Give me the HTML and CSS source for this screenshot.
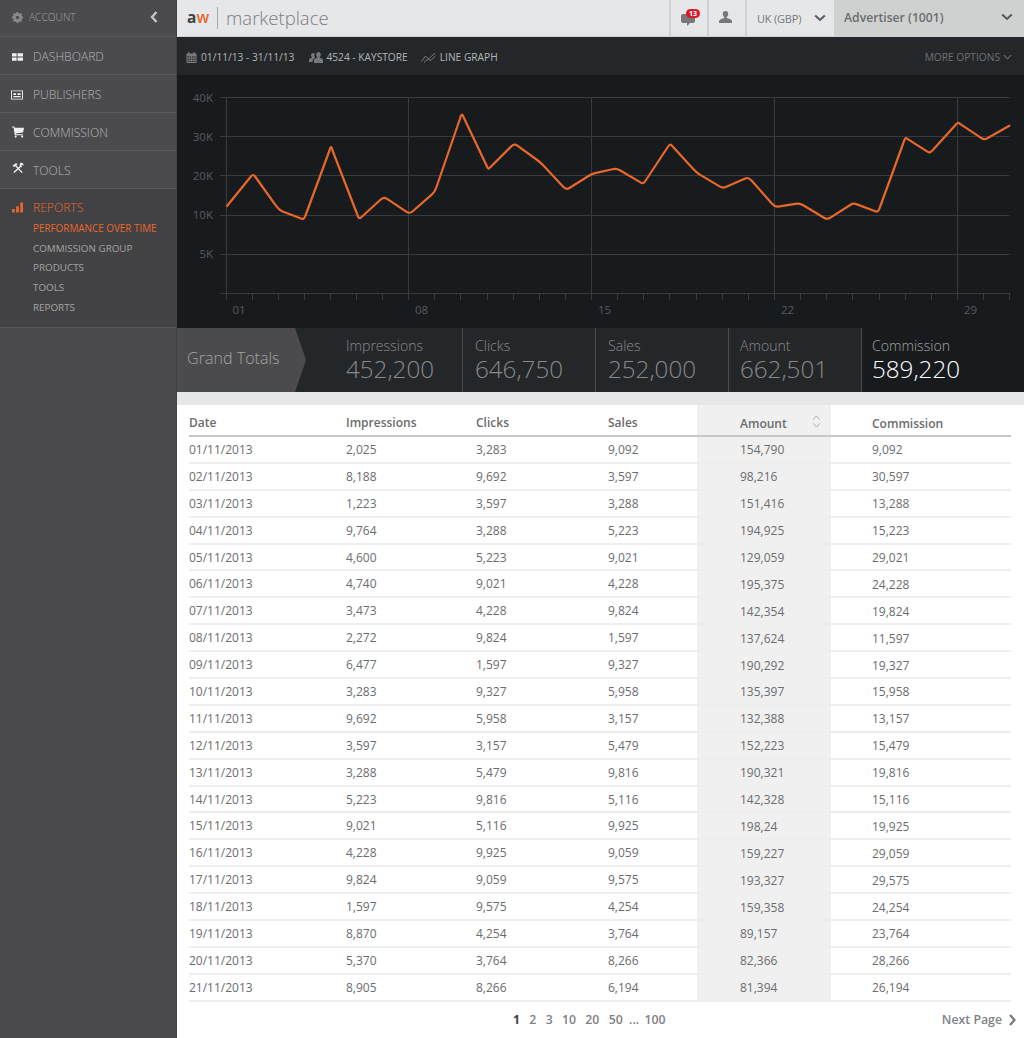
FILE: index.html
```html
<!DOCTYPE html>
<html lang="en">
<head>
<meta charset="utf-8">
<title>aw marketplace</title>
<link rel="stylesheet" href="styles.css">
</head>
<body>
<div class="app">
  <aside class="sidebar">
    <div class="account">
      <svg class="gear" viewBox="0 0 12 12"><path d="M5 0h2l.3 1.500 1 .4L9.600 1l1.400 1.400-.9 1.300.4 1 1.500.3v2l-1.500.3-.4 1 .9 1.300L9.600 11l-1.300-.9-1 .4L7 12H5l-.3-1.500-1-.4-1.300.9L1 9.600l.9-1.300-.4-1L0 7V5l1.500-.3.400-1L1 2.400 2.400 1l1.300.9 1-.4zM6 4a2 2 0 100 4 2 2 0 000-4z" fill-rule="evenodd"/></svg>
      <span class="account-label">ACCOUNT</span>
      <svg class="collapse" viewBox="0 0 8 12"><path d="M6.500 1L2 6l4.500 5" fill="none" stroke-width="2.400"/></svg>
    </div>
    <nav>
      <a class="nav-item">
        <svg class="nav-icon dash" viewBox="0 0 12 8"><path d="M0 0h5v3.500H0zM6 0h6v3.500H6zM0 4.500h5V8H0zM6 4.500h6V8H6z"/></svg>
        <span>DASHBOARD</span>
      </a>
      <a class="nav-item">
        <svg class="nav-icon pub" viewBox="0 0 13 10"><path fill-rule="evenodd" d="M0 0h13v10H0zM1 1v8h11V1zM2.500 3h3v2h-3zM7 3h3.500v2H7zM2.500 6h8v1.500h-8z"/></svg>
        <span>PUBLISHERS</span>
      </a>
      <a class="nav-item">
        <svg class="nav-icon cart" viewBox="0 0 13 12"><path d="M0 0h2.500l.5 1.500h10L12 6.500l-8 1 .3 1H12v1H3L1.700 1H0z"/><circle cx="4" cy="11" r="1.100"/><circle cx="11" cy="11" r="1.100"/></svg>
        <span>COMMISSION</span>
      </a>
      <a class="nav-item">
        <svg class="nav-icon tools" viewBox="0 0 13 12"><path class="tool-handle" d="M3 2.500L11 11M10 3.500L2 11"/><path d="M.5 3.500L4.500 .5 6 2 2 5zM9 .5C11-.2 12.800 1.200 12.500 3.500L11 2.500l-1 1 1 1.500C9.200 5.500 7.800 3.500 8.500 2z"/></svg>
        <span>TOOLS</span>
      </a>
      <div class="reports">
        <a class="nav-item active">
          <svg class="nav-icon" viewBox="0 0 12 11"><path d="M0 7h3v4H0zM4.500 4h3v7h-3zM9 0h3v11H9z"/></svg>
          <span>REPORTS</span>
        </a>
        <ul class="subnav">
          <li class="current">PERFORMANCE OVER TIME</li>
          <li>COMMISSION GROUP</li>
          <li>PRODUCTS</li>
          <li>TOOLS</li>
          <li>REPORTS</li>
        </ul>
      </div>
    </nav>
  </aside>

  <main class="main">
    <header class="topbar">
      <div class="logo">
        <span class="aw"><b>a</b><i>w</i></span>
        <span class="logo-name">marketplace</span>
      </div>
      <div class="top-cell msgs">
        <svg class="msg-icon" viewBox="0 0 14 13"><path d="M2 1h10a2 2 0 012 2v5a2 2 0 01-2 2H9l-3 3v-3H2a2 2 0 01-2-2V3a2 2 0 012-2z"/></svg>
        <span class="badge">13</span>
      </div>
      <div class="top-cell user">
        <svg class="user-icon" viewBox="0 0 13 12"><path d="M6.500 0C8.300 0 9.300 1.300 9.200 3c0 1.300-.6 2.500-1.400 3v1c1.800.6 4.200 1.200 5.200 3v2H0v-2c1-1.800 3.400-2.400 5.200-3V6c-.8-.5-1.400-1.700-1.400-3C3.700 1.300 4.700 0 6.500 0z"/></svg>
      </div>
      <div class="top-cell currency">
        <span>UK (GBP)</span>
        <svg class="chev" viewBox="0 0 12 8"><path d="M1.200 1.500L6 6l4.800-4.500" fill="none" stroke-width="2"/></svg>
      </div>
      <div class="advertiser">
        <span>Advertiser (1001)</span>
        <svg class="chev" viewBox="0 0 12 8"><path d="M1.200 1.500L6 6l4.800-4.500" fill="none" stroke-width="2"/></svg>
      </div>
    </header>

    <div class="toolbar">
      <span class="tool">
        <svg class="tool-icon cal" viewBox="0 0 11 12"><path fill-rule="evenodd" d="M2 0h1.500v1.500h4V0H9v1.500h2V12H0V1.500h2zM1 4.500V6h1.500V4.500zM3.500 4.500V6H5V4.500zM6 4.500V6h1.500V4.500zM8.500 4.500V6H10V4.500zM1 7v1.500h1.500V7zM3.500 7v1.500H5V7zM6 7v1.500h1.500V7zM8.500 7v1.500H10V7zM1 9.500V11h1.500V9.500zM3.500 9.500V11H5V9.500zM6 9.500V11h1.500V9.500zM8.500 9.500V11H10V9.500z"/></svg>
        01/11/13 - 31/11/13
      </span>
      <span class="tool">
        <svg class="tool-icon users" viewBox="0 0 14 11"><path d="M9.500 0c1.500 0 2.300 1 2.300 2.500 0 1.100-.5 2-1.100 2.500v.8c1.300.4 2.600 1 3.300 2V11H5V7.800c.7-1 2-1.600 3.300-2V5c-.6-.5-1.100-1.400-1.100-2.500C7.200 1 8 0 9.500 0zM4.500 1c.6 0 1.100.2 1.500.5-.5.700-.7 1.600-.6 2.500.1.700.4 1.500.9 2-1.100.4-2 .9-2.600 1.700V10H0V7.500c.6-.9 1.700-1.300 2.800-1.700v-.7C2.300 4.600 2 3.800 2 3c0-1.200.9-2 2.500-2z"/></svg>
        4524 - KAYSTORE
      </span>
      <span class="tool">
        <svg class="tool-icon trend" viewBox="0 0 15 11"><path d="M.5 9.500L4.500 4l3 3L14 1M3 10.500l4-3.500 3 1.500 4.500-5" fill="none" stroke-width="1"/></svg>
        LINE GRAPH
      </span>
      <span class="more">
        MORE OPTIONS
        <svg class="more-chev" viewBox="0 0 10 6"><path d="M1 1l4 4 4-4" fill="none" stroke-width="1.200"/></svg>
      </span>
    </div>

    <section class="chart">
      <svg class="chart-svg" viewBox="0 0 847 253" width="847" height="253">
        <g transform="translate(-177 -75)">
          <g class="grid">
            <path d="M220 97.500H1009.500M220 136.500H1009.500M220 175.500H1009.500M220 215.500H1009.500M220 254.500H1009.500M220 293.500H1009.500"/>
            <path d="M226.500 97V300M408.500 97V300M591.500 97V300M774.500 97V300M957.500 97V300"/>
            <path d="M252.500 293v7M278.500 293v7M304.500 293v7M330.500 293v7M356.500 293v7M382.500 293v7M434.500 293v7M460.500 293v7M487.500 293v7M513.500 293v7M539.500 293v7M565.500 293v7M617.500 293v7M643.500 293v7M669.500 293v7M696.500 293v7M722.500 293v7M748.500 293v7M800.500 293v7M826.500 293v7M852.500 293v7M879.500 293v7M905.500 293v7M931.500 293v7M983.500 293v7M1009.500 293v7"/>
          </g>
          <g class="axis-y">
            <text x="213" y="102">40K</text>
            <text x="213" y="141">30K</text>
            <text x="213" y="180">20K</text>
            <text x="213" y="219">10K</text>
            <text x="213" y="258">5K</text>
          </g>
          <g class="axis-x">
            <text x="232.500" y="314">01</text>
            <text x="415" y="314">08</text>
            <text x="598" y="314">15</text>
            <text x="781" y="314">22</text>
            <text x="964" y="314">29</text>
          </g>
          <path class="line" d="M227 206L250.900 176.500Q253 173.500 255.100 176.500L275.900 205.700Q279 210 282 211.200L301 218.500Q304 220 305.500 215.500L329.300 151Q331 143 332.700 151L356.900 213.500Q358.700 220 361 217.500L381 199.300Q384 196.700 387.100 198.800L406.600 211.900Q409.700 214 412.700 211.300L432 194.400Q435 191.700 436.500 187L459.900 119Q461.700 111.500 463.500 117L487 166.500Q488.300 170 490 167.500L511.200 146.400Q514.300 143.300 517.400 145.600L537.200 160Q540.300 162.300 543.400 165.600L563.200 186.700Q566.300 190 569.400 188L588.900 175.700Q592 173.700 595 173.100L613.700 169Q616.700 168.300 619.900 170.200L640.100 182.100Q643.300 184.500 645 181.500L667.800 147Q670 143 672.200 146L693.500 169.200Q696.700 172.700 699.800 174.600L719.600 186.400Q722.700 188.300 725.800 187L745.200 178.400Q748.300 177 751.500 180.600L771.800 203.400Q775 207 778 206.600L797 203.700Q800 203.300 803.300 205.300L824 217.700Q827.300 219.700 830.400 217.700L850.200 205Q853.300 203 856.300 204.100L875.300 211.200Q878.300 212.800 880 207L903 144Q905 136.500 907 138.600L927 151.400Q930 153.800 933.300 149.600L955.500 125Q957.700 121.500 960 123.800L981.100 137.900Q984.300 140.300 987.300 138.300L1009.300 125.700"/>
        </g>
      </svg>
    </section>

    <section class="totals">
      <div class="grand">Grand Totals</div>
      <div class="total t-imp"><span class="t-label">Impressions</span><span class="t-value">452,200</span></div>
      <div class="total t-clk"><span class="t-label">Clicks</span><span class="t-value">646,750</span></div>
      <div class="total t-sal"><span class="t-label">Sales</span><span class="t-value">252,000</span></div>
      <div class="total t-amt"><span class="t-label">Amount</span><span class="t-value">662,501</span></div>
      <div class="total t-com"><span class="t-label">Commission</span><span class="t-value">589,220</span></div>
    </section>

    <div class="band"></div>

    <section class="table">
      <div class="row head">
        <span>Date</span><span>Impressions</span><span>Clicks</span><span>Sales</span>
        <span class="amt">Amount
          <svg class="sort" viewBox="0 0 9 14"><path d="M1 5l3.500-4L8 5M1 9l3.500 4L8 9" fill="none" stroke-width="1"/></svg>
        </span>
        <span class="com">Commission</span>
      </div>
      <div class="row"><span>01/11/2013</span><span>2,025</span><span>3,283</span><span>9,092</span><span class="amt">154,790</span><span class="com">9,092</span></div>
      <div class="row"><span>02/11/2013</span><span>8,188</span><span>9,692</span><span>3,597</span><span class="amt">98,216</span><span class="com">30,597</span></div>
      <div class="row"><span>03/11/2013</span><span>1,223</span><span>3,597</span><span>3,288</span><span class="amt">151,416</span><span class="com">13,288</span></div>
      <div class="row"><span>04/11/2013</span><span>9,764</span><span>3,288</span><span>5,223</span><span class="amt">194,925</span><span class="com">15,223</span></div>
      <div class="row"><span>05/11/2013</span><span>4,600</span><span>5,223</span><span>9,021</span><span class="amt">129,059</span><span class="com">29,021</span></div>
      <div class="row"><span>06/11/2013</span><span>4,740</span><span>9,021</span><span>4,228</span><span class="amt">195,375</span><span class="com">24,228</span></div>
      <div class="row"><span>07/11/2013</span><span>3,473</span><span>4,228</span><span>9,824</span><span class="amt">142,354</span><span class="com">19,824</span></div>
      <div class="row"><span>08/11/2013</span><span>2,272</span><span>9,824</span><span>1,597</span><span class="amt">137,624</span><span class="com">11,597</span></div>
      <div class="row"><span>09/11/2013</span><span>6,477</span><span>1,597</span><span>9,327</span><span class="amt">190,292</span><span class="com">19,327</span></div>
      <div class="row"><span>10/11/2013</span><span>3,283</span><span>9,327</span><span>5,958</span><span class="amt">135,397</span><span class="com">15,958</span></div>
      <div class="row"><span>11/11/2013</span><span>9,692</span><span>5,958</span><span>3,157</span><span class="amt">132,388</span><span class="com">13,157</span></div>
      <div class="row"><span>12/11/2013</span><span>3,597</span><span>3,157</span><span>5,479</span><span class="amt">152,223</span><span class="com">15,479</span></div>
      <div class="row"><span>13/11/2013</span><span>3,288</span><span>5,479</span><span>9,816</span><span class="amt">190,321</span><span class="com">19,816</span></div>
      <div class="row"><span>14/11/2013</span><span>5,223</span><span>9,816</span><span>5,116</span><span class="amt">142,328</span><span class="com">15,116</span></div>
      <div class="row"><span>15/11/2013</span><span>9,021</span><span>5,116</span><span>9,925</span><span class="amt">198,24</span><span class="com">19,925</span></div>
      <div class="row"><span>16/11/2013</span><span>4,228</span><span>9,925</span><span>9,059</span><span class="amt">159,227</span><span class="com">29,059</span></div>
      <div class="row"><span>17/11/2013</span><span>9,824</span><span>9,059</span><span>9,575</span><span class="amt">193,327</span><span class="com">29,575</span></div>
      <div class="row"><span>18/11/2013</span><span>1,597</span><span>9,575</span><span>4,254</span><span class="amt">159,358</span><span class="com">24,254</span></div>
      <div class="row"><span>19/11/2013</span><span>8,870</span><span>4,254</span><span>3,764</span><span class="amt">89,157</span><span class="com">23,764</span></div>
      <div class="row"><span>20/11/2013</span><span>5,370</span><span>3,764</span><span>8,266</span><span class="amt">82,366</span><span class="com">28,266</span></div>
      <div class="row"><span>21/11/2013</span><span>8,905</span><span>8,266</span><span>6,194</span><span class="amt">81,394</span><span class="com">26,194</span></div>
      <div class="pager">
        <div class="pages"><b>1</b><a>2</a><a>3</a><a>10</a><a>20</a><a>50</a><a class="dots">...</a><a>100</a></div>
        <div class="next">Next Page
          <svg class="next-chev" viewBox="0 0 8 12"><path d="M1.500 1L6 6l-4.500 5" fill="none" stroke-width="2.200"/></svg>
        </div>
      </div>
    </section>
  </main>
</div>
</body>
</html>
```
FILE: styles.css
```css
* { box-sizing: border-box; }
html, body { margin: 0; padding: 0; height: 100%; }
body { font-family: "Open Sans", "Liberation Sans", sans-serif; background: #fff; overflow: hidden; }
svg { display: block; flex: none; }
ul { list-style: none; margin: 0; padding: 0; }

.app { display: flex; width: 1024px; height: 1038px; }

/* sidebar */
.sidebar { width: 177px; flex: none; background: #4b4b4d; border-right: 1px solid #434345; }
.account { height: 37px; display: flex; align-items: center; padding: 0 18px 2px 12px; border-bottom: 1px solid #575759; }
.gear { width: 11px; height: 11px; fill: #8a8a8c; }
.account-label { margin-left: 6px; font-size: 10.200px; font-weight: 300; color: #a2a2a4; flex: 1; }
.collapse { width: 8px; height: 12px; stroke: #c4c4c6; }
.nav-item { height: 38px; display: flex; align-items: center; padding: 2px 0 0 12px; border-bottom: 1px solid #5a5a5c; font-size: 12.100px; font-weight: 300; color: #b4b4b6; }
.nav-item span { margin-left: 10px; }
.nav-icon { width: 11px; height: 10px; fill: #f0f0f0; }
.dash { height: 8px; }
.pub { width: 12px; margin-left: -1px; margin-right: 0; height: 10px; }
.cart { width: 12px; height: 12px; margin-right: -1px; margin-top: -2px; }
.tools { width: 12px; height: 12px; margin-top: -5px; margin-right: -1px; }
.tool-handle { fill: none; stroke: #f0f0f0; stroke-width: 1.500; }
.reports { background: #424244; border-top: 1px solid #5a5a5c; margin-top: -1px; height: 140px; border-bottom: 1px solid #565658; }
.nav-item.active { height: 37px; border: 0; padding-top: 0; color: #e8672b; }
.active .nav-icon { fill: #e8672b; height: 11px; }
.subnav { margin-top: -7px; padding-left: 33px; font-size: 9.850px; font-weight: 400; color: #a4a4a6; line-height: 19.700px; }
.subnav .current { color: #e8672b; font-weight: 500; font-size: 9.900px; }

/* main column */
.main { width: 847px; flex: none; display: flex; flex-direction: column; }
.topbar { height: 37px; display: flex; background: #e6e7e9; border-bottom: 1px solid #d2d3d5; }
.logo { width: 492px; display: flex; align-items: center; padding-left: 10px; }
.aw { font-size: 15.500px; font-weight: 600; padding-right: 8px; height: 22px; line-height: 20px; border-right: 1px solid #a8a9ab; }
.aw b { color: #414042; font-weight: 700; }
.aw i { color: #e8672b; font-style: normal; }
.logo-name { margin-left: 8px; font-size: 18.500px; font-weight: 300; color: #7c7d7f; position: relative; top: -1px; }
.top-cell { display: flex; align-items: center; justify-content: center; border-left: 2px solid #cfd0d2; position: relative; }
.msgs, .user { width: 38px; }
.msg-icon { width: 14px; height: 13px; fill: #77787a; margin: 3px 3px 0 0; }
.badge { position: absolute; left: 15px; top: 9px; width: 14px; height: 9px; border-radius: 5px; background: #d7192a; color: #fff; font-size: 7px; font-weight: 700; line-height: 9px; text-align: center; }
.user-icon { width: 13px; height: 12px; fill: #77787a; margin: -2px 3px 0 0; }
.currency { width: 89px; justify-content: space-between; padding: 0 8px 0 10px; font-size: 11px; letter-spacing: -0.200px; color: #77787a; }
.chev { width: 12px; height: 8px; stroke: #58595b; }
.advertiser { flex: 1; background: #cfd1d0; display: flex; align-items: center; justify-content: space-between; padding: 0 11px 2px 10px; font-size: 12.200px; font-weight: 600; color: #6b6c6e; }

.toolbar { height: 38px; display: flex; align-items: center; background: #24272a; padding: 2px 12px 0 9px; font-size: 10.200px; color: #b2b4b6; }
.tool { display: flex; align-items: center; margin-right: 15px; }
.tool:nth-child(2) { margin-right: 13px; }
.tool-icon { fill: #77797b; stroke: #77797b; stroke-width: 0; margin-right: 4px; height: 11px; width: 11px; }
.users { width: 14px; margin-right: 3px; }
.trend { width: 15px; fill: none; stroke: #77797b; margin-right: 4px; }
.more { margin-left: auto; display: flex; align-items: center; color: #6e7072; }
.more-chev { width: 9px; height: 6px; stroke: #6e7072; margin-left: 3px; }

.chart { height: 253px; background: #181b1e; }
.grid path { stroke: #3a3a3c; stroke-width: 1; fill: none; }
.axis-y text, .axis-x text { font-size: 11.500px; font-family: "Open Sans", sans-serif; fill: #58595b; font-weight: 400; }
.axis-y text { text-anchor: end; }
.line { fill: none; stroke: #e8672b; stroke-width: 2.200; stroke-linejoin: round; stroke-linecap: round; }

.totals { height: 64px; display: flex; background: #24272a; }
.grand { width: 129px; background: #4b4b4d; clip-path: polygon(0 0, 118px 0, 129px 32px, 118px 64px, 0 64px); padding: 19px 0 0 10px; font-size: 16.100px; font-weight: 300; color: #a2a3a5; line-height: 22px; }
.total { display: flex; flex-direction: column; padding-top: 8px; font-weight: 300; color: #87898b; border-right: 1px solid #4a4c4e; }
.t-label { font-size: 14.100px; line-height: 20px; }
.t-value { font-size: 24.200px; line-height: 26px; }
.t-imp { width: 157px; padding-left: 40px; }
.t-clk { width: 133px; padding-left: 12px; }
.t-sal { width: 133px; padding-left: 12px; }
.t-amt { width: 133px; padding-left: 11px; }
.t-com { flex: 1; padding-left: 10px; background: #181b1e; border: 0; }
.t-com .t-label { color: #a2a3a5; }
.t-com .t-value { color: #fff; }

.band { height: 13px; background: #e6e7e9; }

.table { flex: 1; padding: 0 13px 0 12px; font-size: 12px; color: #6b6c6e; background: #fff; }
.row { display: grid; grid-template-columns: 157px 130px 132px 89px 134px 1fr; height: 26.900px; align-items: stretch; border-bottom: 2px solid #eeeeef; }
.row > span { display: flex; align-items: center; line-height: 16px; padding-top: 1px; }
.row .amt { background: #f0f0f0; padding-left: 43px; position: relative; padding-top: 2px; }
.row .com { padding-left: 41px; padding-top: 2px; }
.head { height: 32px; border-bottom: 2px solid #c6c7c8; font-weight: 600; }
.row.head > span { padding-top: 6px; }
.row.head .amt, .row.head .com { padding-top: 8px; }
.sort { position: absolute; left: 115px; top: 10px; width: 9px; height: 13px; stroke: #a9aaac; }
.pager { display: flex; align-items: center; height: 36px; position: relative; font-weight: 600; color: #808183; }
.pages { display: flex; gap: 9.300px; margin-left: 324px; font-size: 12.300px; }
.pages b { color: #414042; font-weight: 700; }
.pages .dots { margin: 0 -4px 0 -3px; }
.next { margin-left: auto; display: flex; align-items: center; gap: 6px; font-size: 12.300px; margin-right: -6px; }
.next-chev { width: 9px; height: 12px; stroke: #77787a; }
```
